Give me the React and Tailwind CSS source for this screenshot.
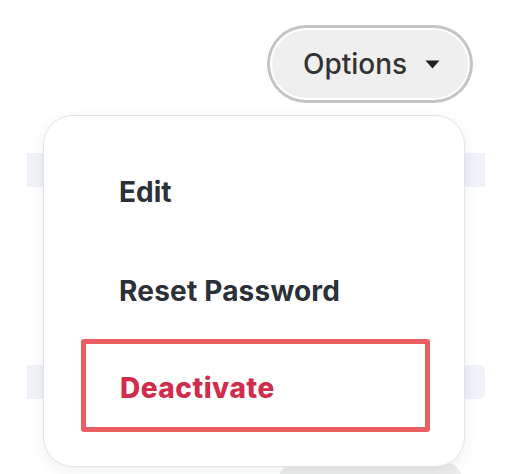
import { useState } from 'react';

function Caret() {
  return (
    <svg width="15" height="9" viewBox="0 0 15 9" className="ml-[18px]">
      <path d="M0.5 0.5h14L7.5 8.5z" fill="#222" />
    </svg>
  );
}

function MenuItem({ label, className = '' }) {
  return (
    <div className={`flex items-center pl-[38px] text-[28px] font-bold text-[#2b3137] ${className}`}>
      {label}
    </div>
  );
}

export default function App() {
  const [open] = useState(true);

  return (
    <div className="relative h-[474px] w-[514px] overflow-hidden bg-white font-['Inter',sans-serif]">
      <div className="flex justify-end pr-[46px] pt-[30px]">
        <button className="flex h-[68px] w-[196px] items-center rounded-full bg-[#efefef] pl-[31px] text-[28px] font-medium text-[#333] shadow-[0_0_0_2px_#fff,0_0_0_5px_#c4c4c4]">
          Options
          <Caret />
        </button>
      </div>

      {/* rows behind the menu */}
      <div className="pl-[27px]">
        <div className="mt-[55px] h-[34px] w-[458px] bg-[#eff2f6]" />
        <div className="mt-[178px] h-[34px] w-[458px] rounded-r-md bg-[#eff2f6]" />
        <div className="ml-[251px] mt-[63px] h-[40px] w-[185px] rounded-full bg-[#ececec]" />
      </div>

      {open && (
        <div className="absolute left-[43px] top-[115px] h-[352px] w-[422px] rounded-[30px] border border-[#dfe4ee] bg-white pb-[34px] pl-[37px] pr-[34px] pt-[26px] shadow-[0_4px_14px_rgba(30,40,60,0.07)]">
          <MenuItem label="Edit" className="h-[100px]" />
          <MenuItem label="Reset Password" className="h-[97px] tracking-[0.2px]" />
          <div className="flex h-[93px] items-center rounded-[3px] border-[5px] border-[#ea5e64] pl-[34px] pt-[5px] text-[28px] font-extrabold tracking-[0.5px] text-[#cf2d4b]">
            Deactivate
          </div>
        </div>
      )}
    </div>
  );
}
